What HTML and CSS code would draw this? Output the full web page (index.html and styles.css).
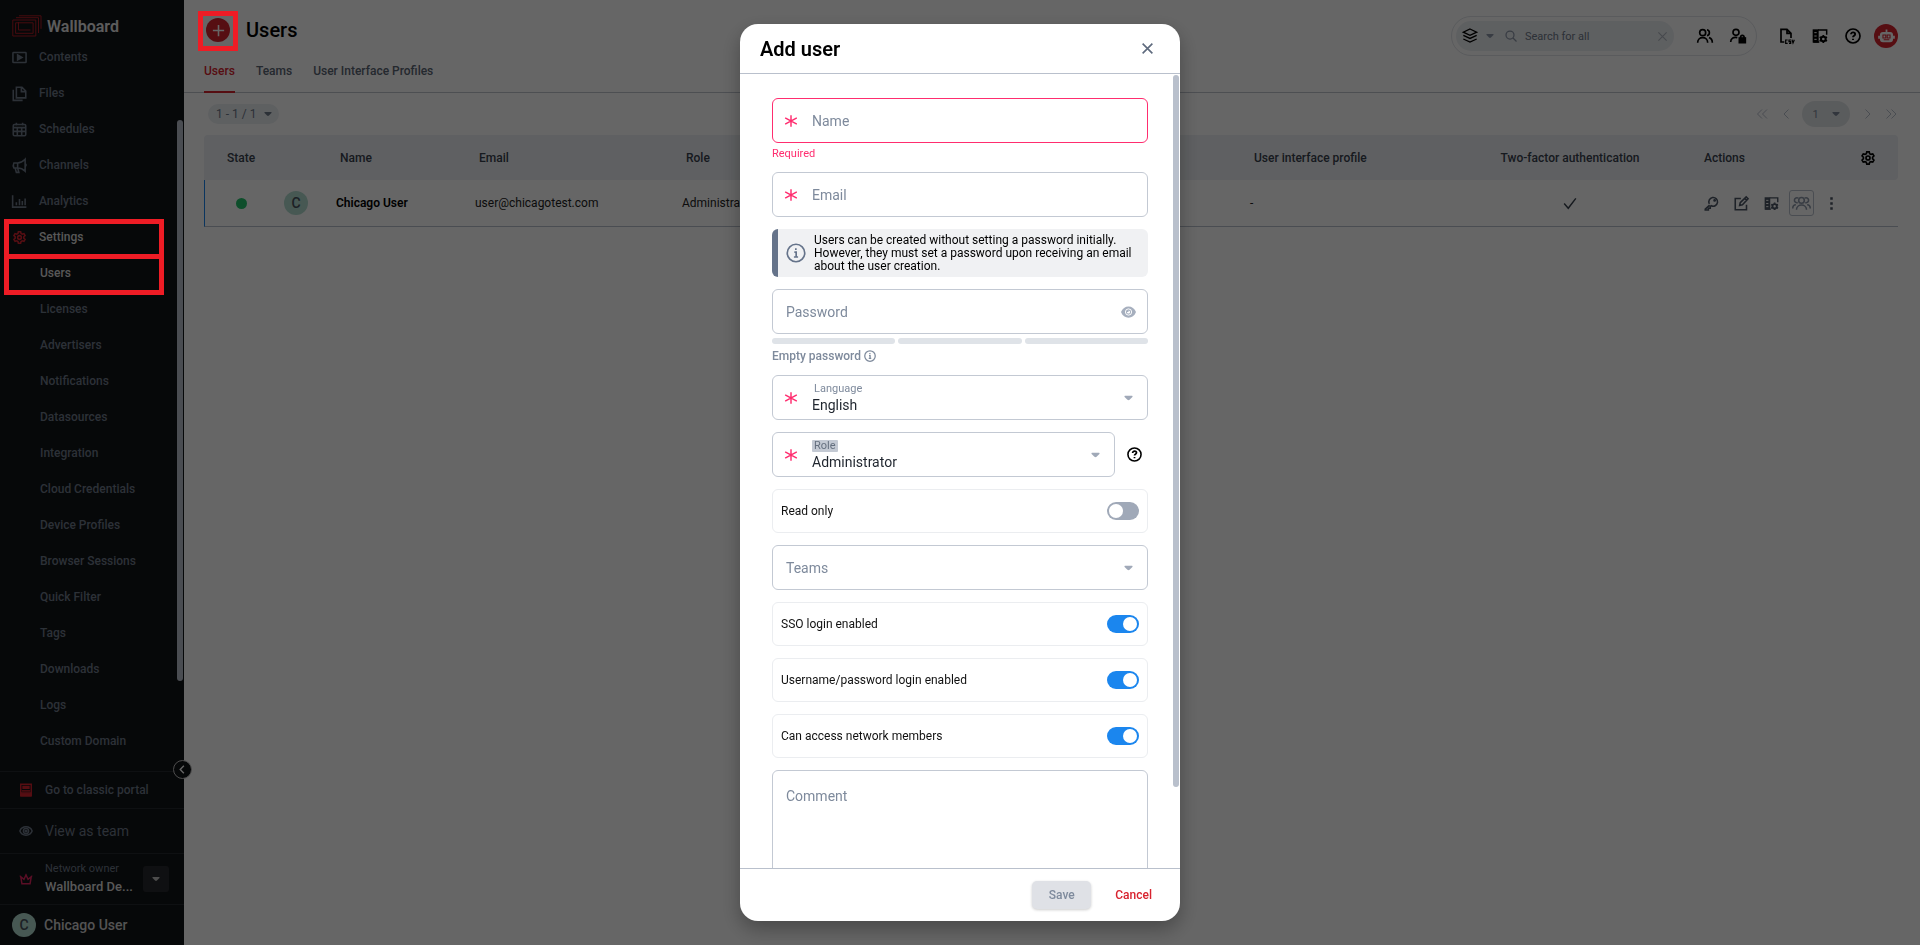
FILE: index.html
```html
<!DOCTYPE html>
<html lang="en">
<head>
<meta charset="utf-8">
<meta name="viewport" content="width=device-width, initial-scale=1">
<title>Wallboard - Users</title>
<link rel="stylesheet" href="styles.css">
</head>
<body>
<svg class="sprite" aria-hidden="true">
  <symbol id="i-caret" viewBox="0 0 10 6"><path d="M1 .5h8q1 .4.3 1.3L6.2 5q-1.2 1-2.400 0L.7 1.800Q0 .9 1 .5z" fill="currentColor"/></symbol>
  <symbol id="i-gear" viewBox="0 0 24 24"><path d="M9.500 4.500 10.200 1.800h3.600l.7 2.700 1.900 1.100 2.700-.8 1.800 3.100-2 2v2.200l2 2-1.800 3.100-2.700-.8-1.900 1.100-.7 2.700h-3.600l-.7-2.700-1.900-1.100-2.700.8-1.800-3.100 2-2V9.900l-2-2 1.800-3.100 2.700.8z" transform="translate(0 1)"/><circle cx="12" cy="12" r="3"/></symbol>
  <symbol id="i-help" viewBox="0 0 24 24"><circle cx="12" cy="12" r="10.500"/><path d="M9 9.500c0-4 6.200-3.700 6.200-.2 0 2.200-3.200 2.400-3.200 4.400M12 16v2" stroke-width="2.800"/></symbol>
  <symbol id="i-info" viewBox="0 0 24 24"><circle cx="12" cy="12" r="10.500"/><path d="M10 11h2.200v5.500M9.500 16.800h5M11.800 6.200v2.200"/></symbol>
  <symbol id="i-star" viewBox="0 0 24 24"><path d="M12 2v20M2 6.500l20 11M22 6.500l-20 11"/></symbol>
  <symbol id="i-x" viewBox="0 0 24 24"><path d="M3 3l18 18M21 3 3 21"/></symbol>
  <symbol id="i-panel" viewBox="0 0 24 24"><path d="M9 3h13v7M2 21h9" stroke-width="2.200"/><path d="M1 2h9v20H1z" fill="currentColor" stroke="none"/><path d="M3.500 7h3.500M3.500 12h3.500M3.500 17h3.500" stroke="#fff" stroke-width="1.500"/><circle cx="17" cy="16.500" r="3.500" stroke-width="3"/><path d="M17 10.500v2M17 20.500v2M11.500 13.500l2 1M20.500 18.500l2 1M11.500 19.500l2-1M20.500 14.500l2-1" stroke-width="2.600"/></symbol>
</svg>

<div class="app">
  <aside class="sidebar">
    <div class="brand">
      <svg class="brand-mark" viewBox="0 0 30 22" aria-hidden="true"><path d="M.8 5h23v16h-23zM3.600 7.800v10.500h17.500V7.800zM6.500 7v8h12" /><path d="M4 2.700h22.500V18M7 .8h22v13"/></svg>
      <span>Wallboard</span>
    </div>
    <nav class="nav">
      <a href="#"><svg viewBox="0 0 24 24"><rect x="1.500" y="4" width="21" height="16" rx="1"/><path d="M9 8l7 4-7 4z" fill="currentColor"/></svg>Contents</a>
      <a href="#"><svg viewBox="0 0 24 24"><path d="M7 2h9l6 6v11H7zM15 2v7h7M2 6v17h15"/></svg>Files</a>
      <a href="#"><svg viewBox="0 0 24 24"><rect x="2" y="4" width="20" height="18" rx="2"/><path d="M2 9h20M2 15h20M8.500 9v13M15.500 9v13M7 1v4M17 1v4"/></svg>Schedules</a>
      <a href="#"><svg viewBox="0 0 24 24"><path d="M21 2v19c-4-4-8-5-12-5H3q-2-4 0-8h6c4 0 8-2 12-6zM9 8v8M5 16l2 7h4l-2-7M21 9q3 2 0 5"/></svg>Channels</a>
      <a href="#"><svg viewBox="0 0 24 24"><path d="M1 2v19h22"/><path d="M7 13v5M12 8v10M16.500 11v7M21 7v11" stroke-width="2.500"/></svg>Analytics</a>
      <a href="#" class="on"><svg class="red" viewBox="0 0 24 24"><use href="#i-gear"/></svg>Settings</a>
      <a href="#" class="sub on">Users</a>
      <a href="#" class="sub">Licenses</a>
      <a href="#" class="sub">Advertisers</a>
      <a href="#" class="sub">Notifications</a>
      <a href="#" class="sub">Datasources</a>
      <a href="#" class="sub">Integration</a>
      <a href="#" class="sub">Cloud Credentials</a>
      <a href="#" class="sub">Device Profiles</a>
      <a href="#" class="sub">Browser Sessions</a>
      <a href="#" class="sub">Quick Filter</a>
      <a href="#" class="sub">Tags</a>
      <a href="#" class="sub">Downloads</a>
      <a href="#" class="sub">Logs</a>
      <a href="#" class="sub">Custom Domain</a>
      <span class="nav-thumb"></span>
    </nav>
    <div class="side-foot">
      <a href="#" class="foot-row classic"><svg viewBox="0 0 24 24" class="red"><path d="M3 2h18v15H3zM3 17v5h18v-5"/><path d="M7 6h10v3H7zM4 19h16v3H4z" fill="currentColor"/><path d="M5 13.500h14"/></svg>Go to classic portal</a>
      <a href="#" class="foot-row team"><svg viewBox="0 0 24 24"><path d="M1.500 12C5 2.500 19 2.500 22.500 12 19 21.500 5 21.500 1.500 12z"/><circle cx="12" cy="12" r="4.500"/><circle cx="12" cy="12" r="1.500"/></svg>View as team</a>
      <div class="foot-row owner"><svg viewBox="0 0 24 24" class="pink"><path d="M3 8l2 12h14l2-12-5.500 4.500L12 5l-3.500 7.500zM12 4v2M2.500 7v1M21.500 7v1"/></svg>
        <div class="owner-text"><small>Network owner</small><strong>Wallboard De...</strong></div>
        <button class="owner-btn" aria-label="Switch network"><svg class="caret"><use href="#i-caret"/></svg></button>
      </div>
      <div class="foot-row me"><span class="avatar">C</span>Chicago User</div>
      <button class="collapse" aria-label="Collapse menu"><svg viewBox="0 0 24 24"><path d="M15 4l-8 8 8 8"/></svg></button>
    </div>
  </aside>

  <main class="main">
    <header class="top">
      <div class="title-row">
        <button class="add" aria-label="Add user"><svg viewBox="0 0 24 24"><path d="M12 3v18M3 12h18"/></svg></button>
        <h1>Users</h1>
        <div class="tools">
          <div class="search-group">
            <div class="search">
              <svg class="ico dark" viewBox="0 0 24 24"><path d="M12 1.500l10 4.700-10 4.700L2 6.200zM2 11l10 4.700L22 11M2 16.500l10 4.700 10-4.700"/></svg>
              <svg class="caret"><use href="#i-caret"/></svg>
              <svg class="mag" viewBox="0 0 24 24"><circle cx="10" cy="10" r="8"/><path d="M16 16l7 7"/></svg>
              <input type="text" placeholder="Search for all" aria-label="Search for all">
              <svg class="clear" viewBox="0 0 24 24"><use href="#i-x"/></svg>
            </div>
            <button aria-label="Users"><svg class="ico" viewBox="0 0 24 24"><circle cx="8.500" cy="7" r="4.500"/><path d="M1 22c0-10 15-10 15 0M15 2.600a4.500 4.500 0 0 1 0 8.800M18 14.500c3.500 1 5 3.500 5 7.500"/></svg></button>
            <button aria-label="Locked users"><svg class="ico" viewBox="0 0 24 24"><circle cx="9" cy="6.500" r="4.500"/><path d="M1 21c0-6 5-8 10-6.500M16 15v-2.500q2.500-3 5 0V15"/><rect x="14" y="15" width="9" height="7" fill="currentColor"/></svg></button>
          </div>
          <button aria-label="Export CSV"><svg class="ico" viewBox="0 0 24 24"><path d="M8 21H3V2h9l6 6v7M12 2v6h6"/><path d="M13 18h-3v5h3M18 18h-3v2.500h2.500V23H15M19.500 17.500l1.500 5 2-5" stroke-width="1.800"/></svg></button>
          <button aria-label="Interface profile"><svg class="ico" viewBox="0 0 24 24"><use href="#i-panel"/></svg></button>
          <button aria-label="Help"><svg class="ico" viewBox="0 0 24 24"><use href="#i-help"/></svg></button>
          <button class="bot" aria-label="Assistant"><svg viewBox="0 0 24 24"><rect x="4" y="7" width="16" height="12" rx="3" fill="#fff"/><path d="M12 2v5M1.500 11v4M22.500 11v4" stroke-width="2.500"/><path d="M7 10h4v4H7zM13 10h4v4h-4zM8 16.500h8" stroke="#d8232f" stroke-width="1.500"/></svg></button>
        </div>
      </div>
      <nav class="tabs"><a href="#" class="on">Users</a><a href="#">Teams</a><a href="#">User Interface Profiles</a></nav>
    </header>
    <div class="pager">
      <button class="pill">1 - 1 / 1 <svg class="caret"><use href="#i-caret"/></svg></button>
      <div class="pages">
        <button aria-label="First page"><svg viewBox="0 0 24 24"><path d="M16 3l-9 9 9 9M26 3l-9 9 9 9"/></svg></button>
        <button aria-label="Previous page"><svg viewBox="0 0 24 24"><path d="M21 3l-9 9 9 9"/></svg></button>
        <button class="page">1 <svg class="caret"><use href="#i-caret"/></svg></button>
        <button aria-label="Next page"><svg viewBox="0 0 24 24"><path d="M7 3l9 9-9 9"/></svg></button>
        <button aria-label="Last page"><svg viewBox="0 0 24 24"><path d="M1 3l9 9-9 9M11 3l9 9-9 9"/></svg></button>
      </div>
    </div>
    <table class="grid">
      <colgroup><col class="c-state"><col class="c-av"><col class="c-name"><col class="c-mail"><col><col class="c-ui"><col class="c-two"><col class="c-act"><col class="c-gear"></colgroup>
      <thead><tr><th class="mid">State</th><th></th><th>Name</th><th>Email</th><th>Role</th><th>User interface profile</th><th class="mid">Two-factor authentication</th><th class="a">Actions</th><th class="mid"><button aria-label="Table settings"><svg class="ico" viewBox="0 0 24 24"><use href="#i-gear"/></svg></button></th></tr></thead>
      <tbody><tr>
        <td class="mid"><span class="dot"></span></td>
        <td class="av"><span class="avatar">C</span></td>
        <td class="name">Chicago User</td><td>user@chicagotest.com</td><td>Administrator</td><td>-</td>
        <td class="mid"><svg class="check" viewBox="0 0 24 24"><path d="M2 13l7 8L22 4"/></svg></td>
        <td colspan="2"><div class="acts">
          <button aria-label="Change password"><svg viewBox="0 0 24 24"><path d="M9 14.500L2 21v1.500h5v-3h3v-3l1.500-1a7 7 0 1 0-3-3"/><circle cx="17" cy="7" r="1" fill="currentColor"/></svg></button>
          <button aria-label="Edit"><svg viewBox="0 0 24 24"><path d="M11 4H2v18h18v-8M9 15l1-4.500L19.500 1.500 22.500 4.500 13.500 14zM17 4l3 3"/></svg></button>
          <button aria-label="Interface profile"><svg viewBox="0 0 24 24"><use href="#i-panel"/></svg></button>
          <button class="boxed" aria-label="Teams"><svg viewBox="0 0 30 24"><circle cx="15" cy="7" r="4.500"/><path d="M7 22c0-10 16-10 16 0M10 3.500a4 4 0 1 0-1 7M20 3.500a4 4 0 1 1 1 7M1 20c0-4 2-6 5-6M29 20c0-4-2-6-5-6"/></svg></button>
          <button aria-label="More"><svg viewBox="0 0 24 24"><path d="M12 2v4M12 10v4M12 18v4" stroke-width="4"/></svg></button>
        </div></td>
      </tr></tbody>
    </table>
  </main>
</div>

<div class="backdrop">
  <section class="dialog" role="dialog" aria-modal="true" aria-labelledby="dlg-title">
    <header class="dlg-head"><h2 id="dlg-title">Add user</h2><button aria-label="Close"><svg viewBox="0 0 24 24"><use href="#i-x"/></svg></button></header>
    <form class="dlg-body" id="user-form">
      <div class="stack error">
        <label class="field"><svg class="star"><use href="#i-star"/></svg><span>Name</span><input type="text"></label>
        <p class="hint">Required</p>
      </div>
      <label class="field"><svg class="star"><use href="#i-star"/></svg><span>Email</span><input type="email"></label>
      <div class="note"><svg viewBox="0 0 24 24"><use href="#i-info"/></svg><p>Users can be created without setting a password initially. However, they must set a password upon receiving an email about the user creation.</p></div>
      <div class="stack">
        <label class="field"><span>Password</span><input type="password"><svg class="eye" viewBox="0 0 24 18"><path d="M0 9C4-3 20-3 24 9 20 21 4 21 0 9z" fill="currentColor"/><circle cx="12" cy="9" r="5" stroke="#fff" stroke-width="1.500"/><path d="M12 6.500a2.500 2.500 0 1 1-2.500 2.500H12z" fill="#fff"/></svg></label>
        <div class="meter"><i></i><i></i><i></i></div>
        <p class="hint">Empty password <svg viewBox="0 0 24 24"><use href="#i-info"/></svg></p>
      </div>
      <label class="field sel"><svg class="star"><use href="#i-star"/></svg><span class="two"><small>Language</small><select><option>English</option></select></span><svg class="caret"><use href="#i-caret"/></svg></label>
      <div class="with-help">
        <label class="field sel"><svg class="star"><use href="#i-star"/></svg><span class="two"><small class="marked">Role</small><select><option>Administrator</option></select></span><svg class="caret"><use href="#i-caret"/></svg></label>
        <button type="button" aria-label="Role help"><svg viewBox="0 0 24 24"><use href="#i-help"/></svg></button>
      </div>
      <label class="toggle">Read only<input type="checkbox" role="switch"></label>
      <label class="field sel"><span>Teams</span><select></select><svg class="caret"><use href="#i-caret"/></svg></label>
      <label class="toggle">SSO login enabled<input type="checkbox" role="switch" checked></label>
      <label class="toggle">Username/password login enabled<input type="checkbox" role="switch" checked></label>
      <label class="toggle">Can access network members<input type="checkbox" role="switch" checked></label>
      <label class="field area"><span>Comment</span><textarea></textarea></label>
      <span class="dlg-thumb"></span>
    </form>
    <footer class="dlg-foot"><button class="save" disabled>Save</button><button class="cancel">Cancel</button></footer>
  </section>
</div>
<div class="mark mark-add"></div>
<div class="mark mark-settings"></div>
<div class="mark mark-users"></div>
</body>
</html>
```

FILE: styles.css
```css
* { box-sizing: border-box; }
body { margin: 0; font-family: Roboto, "Open Sans", sans-serif; font-size: 12px; color: #000; background: #fff; }
h1, h2, p { margin: 0; }
a { color: inherit; text-decoration: none; }
button { font: inherit; color: inherit; background: none; border: 0; padding: 0; display: inline-flex; align-items: center; justify-content: center; }
input, select, textarea { font: inherit; color: inherit; background: none; border: 0; outline: 0; padding: 0; min-width: 0; }
svg { fill: none; stroke: currentColor; stroke-width: 2.5; flex: none; display: block; overflow: visible; }
.sprite { position: absolute; width: 0; height: 0; }
.caret { width: 8px; height: 6px; stroke: none; }
.ico { width: 16px; height: 16px; }
.red { color: #d8232f; }
.pink { color: #e0245e; }

.app { display: flex; height: 100vh; overflow: hidden; }

/* Sidebar */
.sidebar { width: 184px; flex: none; display: flex; flex-direction: column; background: #111417; color: #6f7b8b; }
.brand { display: flex; align-items: center; gap: 5px; height: 39px; padding: 13px 12px 0; font-size: 16px; font-weight: 600; }
.brand span { color: #e6e6e6; }
.brand-mark { width: 30px; height: 22px; color: #b01c26; stroke-width: 1; }
.nav { position: relative; flex: 1; min-height: 0; overflow: hidden; }
.nav a { display: flex; align-items: center; gap: 12px; height: 36px; padding-left: 12px; font-weight: 500; }
.nav svg { width: 15px; height: 15px; }
.nav .sub { padding-left: 40px; }
.nav .on { color: #dcdcdc; }
.nav .on .red { color: #d8232f; }
.nav-thumb { position: absolute; right: 1px; top: 81px; width: 6px; height: 561px; border-radius: 3px; background: #b9c0cc; }
.side-foot { position: relative; }
.foot-row { display: flex; align-items: center; border-top: 1px solid #25282d; padding-left: 19px; gap: 12px; }
.foot-row svg { width: 14px; height: 14px; }
.classic { height: 37px; font-weight: 500; }
.team { height: 45px; font-size: 14px; }
.owner { height: 51px; }
.owner-text { flex: 1; min-width: 0; display: grid; gap: 3px; }
.owner-text small { font-size: 11px; line-height: 12px; }
.owner-text strong { font-size: 13px; line-height: 17px; font-weight: 500; color: #dcdcdc; white-space: nowrap; }
.owner-btn { width: 26px; height: 26px; margin-right: 15px; border-radius: 3px; background: #26292e; color: #c0c0c0; }
.foot-row .caret { width: 8px; height: 6px; }
.me { height: 41px; padding-left: 12px; gap: 8px; font-size: 14px; font-weight: 500; color: #d0d0d0; }
.avatar { display: inline-flex; align-items: center; justify-content: center; width: 24px; height: 24px; border-radius: 50%; background: #b1dccf; color: #46505c; font-size: 14px; font-weight: 500; }
.collapse { position: absolute; top: -11px; right: -8px; width: 19px; height: 19px; border: 1px solid #c0c0c0; border-radius: 50%; background: #111417; color: #fff; }
.collapse svg { width: 11px; height: 11px; stroke-width: 3; }

/* Main */
.main { flex: 1; min-width: 0; }
.top { height: 93px; border-bottom: 1px solid #c0c5ce; padding: 0 22px 0 20px; display: flex; flex-direction: column; justify-content: space-between; }
.title-row { display: flex; align-items: center; padding-left: 2px; height: 60px; }
.add { width: 24px; height: 24px; border-radius: 50%; background: #d8232f; color: #fff; }
.add svg { width: 15px; height: 15px; }
h1 { margin-left: 16px; font-size: 20px; font-weight: 500; line-height: 24px; }
.tools { margin: 12px 0 0 auto; display: flex; align-items: center; gap: 17px; }
.search-group { display: flex; align-items: center; gap: 17px; height: 40px; padding: 0 10px 0 4px; margin-right: 5px; border: 1px solid #e0e3e8; border-radius: 20px; }
.search { display: flex; align-items: center; height: 30px; width: 218px; padding: 0 6px; border-radius: 15px; background: #eceff3; color: #8c97a8; gap: 8px; }
.search-group > button:first-of-type { margin-left: 6px; }
.search .dark { color: #000; stroke-width: 2; }
.search .mag { width: 12px; height: 12px; margin-left: 3px; }
.search input { flex: 1; font-size: 11px; }
.search input::placeholder { color: #6f7a8a; opacity: 1; }
.search .clear { width: 11px; height: 11px; color: #b0b7c2; }
.bot { width: 24px; height: 24px; margin-left: -4px; border-radius: 50%; background: #d8232f; color: #fff; }
.bot svg { width: 17px; height: 17px; }
.tabs { display: flex; gap: 21px; color: #5b6675; font-weight: 500; }
.tabs a { height: 29px; line-height: 15px; margin-bottom: -1px; border-bottom: 2px solid transparent; }
.tabs .on { color: #d8232f; border-color: #d8232f; }
.pager { display: flex; align-items: center; justify-content: space-between; height: 42px; padding: 0 22px 0 24px; color: #6f7a8a; }
.pill { height: 20px; padding: 0 7px 0 8px; gap: 8px; border-radius: 10px; background: #eceff3; }
.pages { display: flex; align-items: center; gap: 12px; color: #b9c0cc; }
.pages > button > svg:not(.caret) { width: 12px; height: 12px; stroke-width: 2; }
.pages .page { width: 48px; height: 26px; gap: 13px; border-radius: 13px; background: #e2e6e8; color: #7d8898; font-size: 11px; }
.grid { width: calc(100% - 42px); margin-left: 20px; table-layout: fixed; border-collapse: separate; border-spacing: 0; }
.c-state { width: 74px; } .c-av { width: 42px; } .c-name { width: 139px; } .c-mail { width: 207px; } .c-ui { width: 218px; } .c-two { width: 236px; } .c-act { width: 150px; } .c-gear { width: 60px; }
.grid th { height: 45px; padding: 0 0 0 20px; background: #edf0f4; color: #39424e; font-weight: 500; text-align: left; white-space: nowrap; }
.grid th:first-child { border-radius: 4px 0 0 0; }
.grid th:last-child { border-radius: 0 4px 4px 0; color: #000; }
.grid .a { padding-left: 16px; }
.grid td { height: 47px; padding: 0 0 0 16px; border-bottom: 1px solid #b9c0cc; color: #222; }
.grid td:first-child { border-left: 1px solid #1b86ee; }
.grid .mid { padding: 0; text-align: center; }
.grid .mid button { vertical-align: middle; }
.grid .av { padding: 0 0 0 6px; }
.grid .name { color: #000; font-weight: 600; }
.dot { display: inline-block; width: 11px; height: 11px; border-radius: 50%; background: #24c46c; vertical-align: middle; }
.check { width: 14px; height: 14px; margin: 0 auto; color: #39424e; }
.acts { display: flex; align-items: center; gap: 15px; color: #4c5665; }
.acts svg { width: 15px; height: 15px; }
.acts .boxed { width: 25px; height: 26px; margin: 0 -5px; border: 1px solid #b9c0cc; border-radius: 3px; color: #8c97a8; }
.acts .boxed svg { width: 19px; }

/* Dialog */
.backdrop { position: fixed; inset: 0; display: flex; justify-content: center; padding: 24px; background: rgba(0, 0, 0, .6); }
.dialog { width: 440px; max-width: 100%; display: flex; flex-direction: column; overflow: hidden; border-radius: 18px; background: #fff; box-shadow: 0 8px 20px rgba(0, 0, 0, .3); }
.dlg-head { display: flex; align-items: center; justify-content: space-between; height: 50px; flex: none; padding: 0 26px 0 20px; border-bottom: 1px solid #b9c0cc; }
.dlg-head button { color: #5f6b7e; }
.dlg-head svg { width: 13px; height: 13px; stroke-width: 3; }
h2 { font-size: 20px; font-weight: 600; line-height: 24px; }
.dlg-body { position: relative; flex: 1; min-height: 0; overflow: hidden; display: flex; flex-direction: column; gap: 12px; padding: 24px 32px 0; }
.dlg-body > * { flex: none; }
.field, .toggle { display: flex; align-items: center; height: 45px; border: 1px solid #c3c9d3; border-radius: 6px; }
.field { padding: 0 13px; color: #7e8a9c; font-size: 14px; }
.field input { flex: 1; margin-left: 8px; }
.star { width: 14px; height: 14px; margin: 0 14px 0 -2px; color: #ff2d6f; }
.error .field { border-color: #ff2d6f; }
.hint { display: flex; align-items: center; gap: 3px; height: 15px; color: #7e8a9c; font-weight: 500; }
.hint svg { width: 12px; height: 12px; }
.stack { display: grid; gap: 4px; }
.error { gap: 3px; }
.error .hint { height: 14px; color: #ff2d6f; font-size: 11px; font-weight: 400; }
.note { display: flex; align-items: center; gap: 8px; height: 48px; padding: 0 8px; border-left: 6px solid #65738a; border-radius: 6px; background: #f0f1f3; }
.note svg { width: 20px; height: 20px; color: #65738a; stroke-width: 2; }
.note p { line-height: 13px; }
.eye { width: 15px; height: 12px; margin-right: -2px; color: #a6afbe; stroke: none; }
.meter { display: grid; grid-template-columns: repeat(3, 1fr); gap: 3px; }
.meter i { height: 6px; border-radius: 3px; background: #dfe3e8; }
.sel select { appearance: none; flex: 1; color: #1f252e; font-size: 14px; }
.sel .two { flex: 1; display: grid; gap: 2px; justify-items: start; padding-top: 1px; }
.two small { font-size: 11px; line-height: 12px; padding: 0 2px; }
.two .marked { color: #65707f; background: #c3c9d3; border-radius: 1px; }
.two select { width: 100%; height: 17px; }
.field .caret { color: #a0a9b8; width: 9px; margin-right: 1px; }
.with-help { display: flex; align-items: center; gap: 12px; }
.with-help .field { flex: 1; }
.with-help button { margin-right: 6px; }
.with-help svg:not(.star):not(.caret) { width: 15px; height: 15px; }
.toggle { height: 44px; justify-content: space-between; padding: 0 8px; border-color: #ebedf0; color: #111; }
.toggle input { appearance: none; width: 32px; height: 18px; margin: 0; padding: 2px; border-radius: 9px; background: #a0a9b8; display: flex; }
.toggle input::before { content: ""; width: 14px; height: 14px; border-radius: 50%; background: #fff; }
.toggle input:checked { background: #1b86ee; justify-content: flex-end; }
.area { height: 140px; align-items: flex-start; padding-top: 17px; }
.area textarea { flex: 1; resize: none; height: 100px; }
.dlg-thumb { position: absolute; right: 1px; top: 1px; width: 6px; height: 712px; border-radius: 3px; background: #b9c0cc; }
.dlg-foot { display: flex; align-items: center; justify-content: flex-end; gap: 24px; height: 53px; flex: none; padding-right: 28px; border-top: 1px solid #b9c0cc; font-weight: 500; }
.save { width: 59px; height: 28px; border-radius: 5px; background: #dfe1e6; color: #7e8a9c; box-shadow: 0 1px 3px rgba(0, 0, 0, .2); }
.cancel { color: #d8232f; }

/* Callout frames */
.mark { position: absolute; border: 5px solid #ee1c25; pointer-events: none; }
.mark-add { left: 198px; top: 11px; width: 40px; height: 40px; }
.mark-settings { left: 4px; top: 219px; width: 160px; height: 40px; }
.mark-users { left: 4px; top: 254px; width: 160px; height: 41px; }
```
